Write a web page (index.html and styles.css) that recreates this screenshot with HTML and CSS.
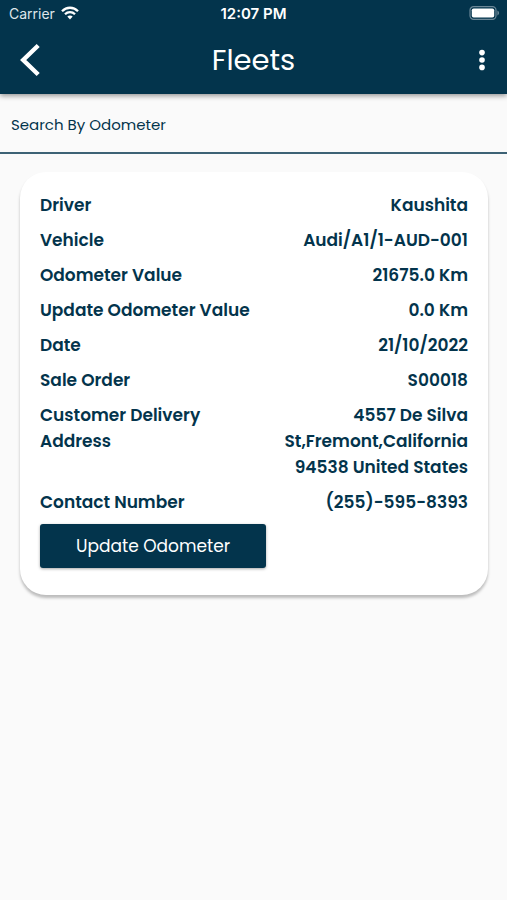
FILE: index.html
```html
<!DOCTYPE html>
<html lang="en">
<head>
    <meta charset="UTF-8">
    <meta name="viewport" content="width=device-width, initial-scale=1.0">
    <title>Fleets</title>
    <link rel="stylesheet" href="styles.css">
</head>
<body>
    <header class="header">
        <div class="status-bar">
            <div class="carrier">
                <span>Carrier</span>
                <svg width="18" height="14" viewBox="0 0 18 14" fill="none" stroke="#fff" stroke-width="2.3" aria-hidden="true">
                    <path d="M1 5.2C5.5 0.6 12.5 0.6 17 5.2"/>
                    <path d="M4 8.3C6.8 5.5 11.2 5.5 14 8.3"/>
                    <path d="M6.3 10.6C7.8 9.1 10.2 9.1 11.7 10.6L9 13.4Z" fill="#fff" stroke="none"/>
                </svg>
            </div>
            <div class="time">12:07 PM</div>
            <div class="battery">
                <svg width="31" height="14" viewBox="0 0 31 14" aria-hidden="true">
                    <rect x="1" y="0.7" width="26" height="12.6" rx="3.6" fill="none" stroke="#6b8797" stroke-width="1.2"/>
                    <rect x="2.8" y="2.4" width="22.4" height="9.2" rx="1.8" fill="#fff"/>
                    <path d="M28.4 4.6C30.6 5.4 30.6 8.6 28.4 9.4Z" fill="#6b8797"/>
                </svg>
            </div>
        </div>
        <div class="nav-bar">
            <button class="icon-button" type="button" aria-label="Back">
                <svg width="20" height="34" viewBox="0 0 20 34" fill="none" stroke="#fff" stroke-width="4.4" aria-hidden="true">
                    <path d="M18.2 2.5L3.2 17L18.2 31.5"/>
                </svg>
            </button>
            <h1>Fleets</h1>
            <button class="icon-button menu-button" type="button" aria-label="More options">
                <svg width="6" height="22" viewBox="0 0 6 22" fill="#fff" aria-hidden="true">
                    <circle cx="3" cy="3.6" r="2.8"/>
                    <circle cx="3" cy="11" r="2.8"/>
                    <circle cx="3" cy="18.4" r="2.8"/>
                </svg>
            </button>
        </div>
    </header>

    <main>
        <input class="search" type="text" placeholder="Search By Odometer" aria-label="Search By Odometer">

        <section class="card">
            <dl class="details">
                <div class="row"><dt>Driver</dt><dd>Kaushita</dd></div>
                <div class="row"><dt>Vehicle</dt><dd>Audi/A1/1-AUD-001</dd></div>
                <div class="row"><dt>Odometer Value</dt><dd>21675.0 Km</dd></div>
                <div class="row"><dt>Update Odometer Value</dt><dd>0.0 Km</dd></div>
                <div class="row"><dt>Date</dt><dd>21/10/2022</dd></div>
                <div class="row"><dt>Sale Order</dt><dd>S00018</dd></div>
                <div class="row"><dt>Customer Delivery Address</dt><dd>4557 De Silva St,Fremont,California 94538 United States</dd></div>
                <div class="row"><dt>Contact Number</dt><dd>(255)-595-8393</dd></div>
            </dl>
            <button class="update-button" type="button">Update Odometer</button>
        </section>
    </main>
</body>
</html>
```
FILE: styles.css
```css
* {
    box-sizing: border-box;
}
body {
    font-family: Poppins, Inter, sans-serif;
    color: #03344c;
    margin: 0;
    background-color: #fafafa;
}
.header {
    position: relative;
    background-color: #03344c;
    color: #fff;
    box-shadow: 0 2px 5px rgba(0, 0, 0, 0.4);
}
.status-bar {
    display: grid;
    grid-template-columns: 1fr auto 1fr;
    align-items: center;
    height: 26px;
    padding: 0 7px;
    font-family: Inter, sans-serif;
    font-size: 14px;
}
.carrier {
    display: flex;
    align-items: center;
    gap: 6px;
    padding-left: 2px;
    color: #dfe6ea;
}
.time {
    font-size: 15px;
    font-weight: 600;
}
.battery {
    display: flex;
    justify-content: flex-end;
}
.nav-bar {
    display: grid;
    grid-template-columns: 1fr auto 1fr;
    align-items: center;
    height: 68px;
    padding: 0 20px;
}
h1 {
    margin: 0;
    font-size: 29px;
    font-weight: 400;
    line-height: 44px;
}
.icon-button {
    display: flex;
    justify-self: start;
    padding: 0;
    background: none;
    border: none;
    cursor: pointer;
}
.menu-button {
    justify-self: end;
    padding: 0 2px;
}
.search {
    display: block;
    width: 100%;
    height: 60px;
    padding: 3px 11px 0;
    border: none;
    border-bottom: 2px solid #3d6275;
    background-color: #fafafa;
    color: #03344c;
    font-family: inherit;
    font-size: 15px;
    outline: none;
}
.search::placeholder {
    color: #03344c;
    opacity: 1;
}
.card {
    margin: 18px 19px 20px 20px;
    padding: 20px 20px 27px;
    background-color: #fff;
    border-radius: 26px;
    box-shadow: 0 3px 3px rgba(0, 0, 0, 0.25);
}
.details {
    display: flex;
    flex-direction: column;
    gap: 9px;
    margin: 0;
    font-size: 17px;
    font-weight: 600;
    line-height: 26px;
}
.row {
    display: grid;
    grid-template-columns: 1fr 1fr;
}
dd {
    margin: 0;
    text-align: right;
}
.update-button {
    display: block;
    height: 44px;
    margin-top: 9px;
    padding: 0 36px;
    background-color: #03344c;
    color: #fff;
    border: none;
    border-radius: 3px;
    box-shadow: 0 1px 3px rgba(0, 0, 0, 0.35);
    font-family: inherit;
    font-size: 17px;
    cursor: pointer;
}
```
